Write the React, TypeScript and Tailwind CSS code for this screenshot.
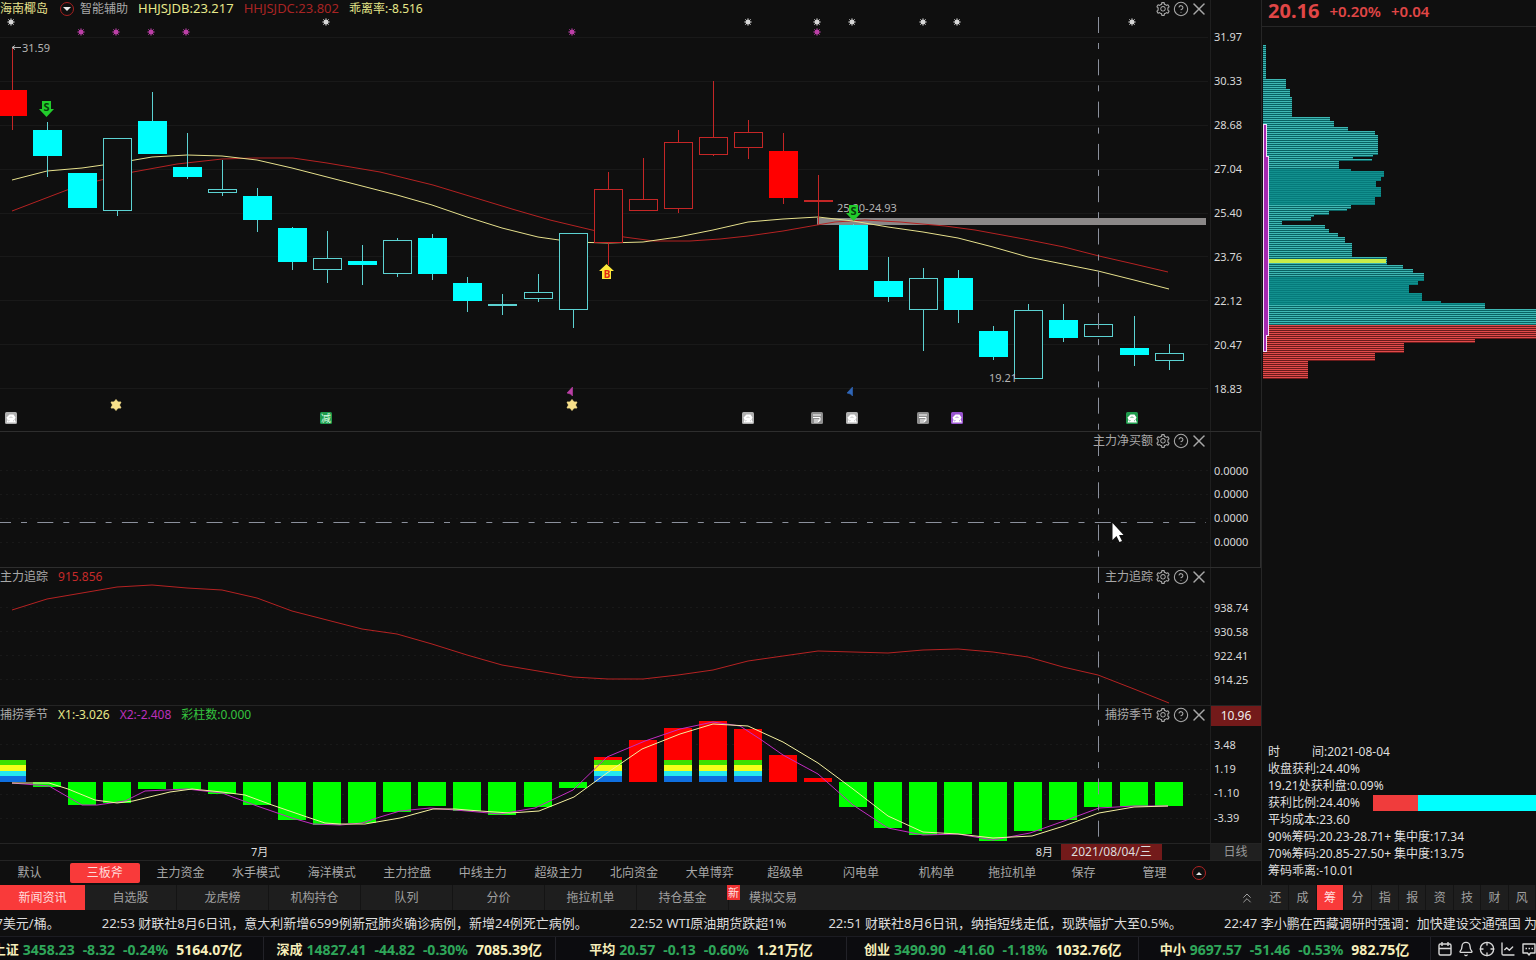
import { Fragment } from 'react';
import type { ReactNode } from 'react';
import { Bell, ChartLine, ChevronsUp, CircleQuestionMark, Crosshair, X } from 'lucide-react';
import { AiOutlineSetting } from 'react-icons/ai';
import clsx from 'clsx';

type Point = [number, number];
type CandleKind = 'up' | 'upHollow' | 'down' | 'downHollow';

interface Candle {
  high: number;
  top: number;
  bottom: number;
  low: number;
  kind: CandleKind;
}

interface IndexQuote {
  name: string;
  last: string;
  change: string;
  percent: string;
  turnover: string;
}

// Horizontal centre of the n-th trading day
const dayX = (i: number) => Math.round(11.6 + 35.06 * i);

const c = (high: number, top: number, bottom: number, low: number, kind: CandleKind): Candle => ({
  high,
  top,
  bottom,
  low,
  kind,
});

const CANDLES: Candle[] = [
  c(48, 90, 116, 130, 'up'),
  c(122, 130, 156, 177, 'down'),
  c(173, 173, 208, 208, 'down'),
  c(138, 138, 210, 216, 'downHollow'),
  c(92, 121, 154, 154, 'down'),
  c(133, 167, 177, 179, 'down'),
  c(160, 189, 192, 196, 'downHollow'),
  c(188, 196, 220, 232, 'down'),
  c(227, 228, 262, 270, 'down'),
  c(231, 258, 269, 283, 'downHollow'),
  c(245, 261, 265, 285, 'down'),
  c(238, 240, 273, 277, 'downHollow'),
  c(234, 238, 274, 280, 'down'),
  c(277, 283, 301, 312, 'down'),
  c(294, 304, 306, 315, 'down'),
  c(274, 292, 298, 302, 'downHollow'),
  c(233, 233, 309, 328, 'downHollow'),
  c(172, 189, 242, 265, 'upHollow'),
  c(158, 199, 210, 210, 'upHollow'),
  c(130, 142, 208, 213, 'upHollow'),
  c(81, 137, 154, 156, 'upHollow'),
  c(120, 132, 147, 159, 'upHollow'),
  c(133, 151, 198, 204, 'up'),
  c(175, 200, 202, 224, 'up'),
  c(224, 225, 270, 270, 'down'),
  c(257, 281, 297, 302, 'down'),
  c(268, 278, 309, 351, 'downHollow'),
  c(270, 278, 310, 323, 'down'),
  c(326, 331, 357, 360, 'down'),
  c(304, 310, 378, 378, 'downHollow'),
  c(304, 320, 338, 342, 'down'),
  c(314, 324, 336, 336, 'downHollow'),
  c(316, 348, 355, 366, 'down'),
  c(344, 353, 360, 370, 'downHollow'),
];

const LINE_B = [
  180, 171, 168, 163, 157, 155, 156, 160, 168, 177, 186, 195, 205, 217, 228, 237, 242, 243, 242, 237, 230,
  222, 219, 217, 221, 227, 232, 238, 247, 257, 264, 271, 280, 289,
].map((y, i): Point => [dayX(i), y]);

const LINE_C: Point[] = [
  [12, 211], [67, 190], [97, 181], [133, 172], [177, 164], [222, 159], [254, 158], [293, 158], [327, 163],
  [380, 172], [433, 185], [512, 209], [550, 220], [592, 230], [624, 237], [654, 241], [690, 241], [720, 239],
  [748, 236], [783, 231], [817, 225], [835, 222], [865, 220], [900, 222], [945, 226], [975, 230], [1024, 239],
  [1064, 247], [1099, 256], [1134, 264], [1168, 272],
];

const TRACKING: Point[] = [
  610, 599, 593, 587, 585, 588, 590, 598, 611, 620, 629, 634, 644, 655, 665, 671, 677, 679, 679, 675, 670,
  661, 656, 651, 652, 653, 650, 649, 652, 657, 667, 675, 689, 703,
].map((y, i): Point => [dayX(i), y]);

const ZERO_Y = 782;
const BARS = [
  760, 787, 805, 803, 789, 789, 794, 805, 820, 825, 823, 812, 806, 811, 815, 807, 788, 757, 740, 728, 721,
  729, 755, 778, 807, 828, 835, 834, 841, 831, 820, 807, 806, 806,
];
const RAINBOW_DAYS = [0, 17, 19, 20, 21];

const X1_LINE: Point[] = [
  [12, 783], [49, 783], [68, 789], [95, 800], [117, 803], [133, 801], [170, 792], [192, 789], [222, 792],
  [245, 795], [272, 805], [307, 817], [325, 823], [340, 824], [365, 824], [400, 818], [433, 809], [455, 809],
  [480, 811], [510, 813], [539, 811], [574, 797], [607, 773], [642, 749], [680, 734], [713, 724], [748, 726],
  [783, 742], [818, 763], [853, 789], [888, 816], [923, 832], [958, 834], [993, 838], [1032, 836], [1064, 826],
  [1099, 813], [1134, 807], [1168, 806],
];
const X2_LINE: Point[] = [
  [12, 783], [49, 786], [82, 805], [97, 805], [125, 801], [145, 791], [187, 789], [222, 793], [257, 806],
  [292, 818], [313, 824], [340, 825], [362, 823], [380, 817], [400, 811], [430, 808], [467, 811], [500, 814],
  [535, 808], [573, 790], [607, 757], [645, 741], [680, 729], [713, 722], [740, 726], [760, 739], [783, 755],
  [818, 774], [853, 805], [888, 828], [923, 835], [958, 834], [993, 840], [1030, 833], [1064, 821], [1099, 808],
  [1134, 806], [1168, 806],
];

// Chip distribution: [first y, bar width], each entry holds until the next one
const CHIPS: Point[] = [
  [45, 3], [79, 23], [89, 27], [97, 29], [117, 67], [120, 71], [127, 85], [131, 112], [135, 115], [155, 110],
  [157, 90], [159, 109], [161, 76], [169, 88], [171, 121], [177, 118], [181, 113], [187, 118], [197, 112],
  [205, 88], [209, 84], [211, 66], [215, 51], [217, 48], [221, 19], [225, 62], [229, 66], [233, 75], [237, 82],
  [243, 89], [257, 124], [265, 140], [269, 150], [273, 161], [281, 155], [285, 146], [293, 159], [301, 178],
  [303, 222], [309, 274], [339, 212], [343, 141], [353, 112], [361, 45],
];
const CHIP_ROWS = Array.from({ length: 167 }, (_, i) => {
  const y = 45 + i * 2;
  const run = CHIPS.filter(([start]) => start <= y).pop();
  return { y, width: run ? run[1] : 0 };
});

const chipColors = (y: number) => {
  if (y >= 325) return ['#6a1b1b', '#e24a4a'];
  if ((y > 168 && y < 205) || (y > 275 && y < 305)) return ['#067a7a', '#12908e'];
  return ['#0a6262', '#3fb8b4'];
};

const TEMPLATES = [
  '三板斧', '主力资金', '水手模式', '海洋模式', '主力控盘', '中线主力', '超级主力', '北向资金', '大单博弈', '超级单',
  '闪电单', '机构单', '拖拉机单',
];
const NAV_TABS = ['自选股', '龙虎榜', '机构持仓', '队列', '分价', '拖拉机单', '持仓基金', '模拟交易'];
const SIDE_TABS = ['还', '成', '筹', '分', '指', '报', '资', '技', '财', '风'];

const NEWS = [
  '57美元/桶。',
  '22:53 财联社8月6日讯，意大利新增6599例新冠肺炎确诊病例，新增24例死亡病例。',
  '22:52 WTI原油期货跌超1%',
  '22:51 财联社8月6日讯，纳指短线走低，现跌幅扩大至0.5%。',
  '22:47 李小鹏在西藏调研时强调：加快建设交通强国 为',
];

const INDEXES: IndexQuote[] = [
  { name: '上证', last: '3458.23', change: '-8.32', percent: '-0.24%', turnover: '5164.07亿' },
  { name: '深成', last: '14827.41', change: '-44.82', percent: '-0.30%', turnover: '7085.39亿' },
  { name: '平均', last: '20.57', change: '-0.13', percent: '-0.60%', turnover: '1.21万亿' },
  { name: '创业', last: '3490.90', change: '-41.60', percent: '-1.18%', turnover: '1032.76亿' },
  { name: '中小', last: '9697.57', change: '-51.46', percent: '-0.53%', turnover: '982.75亿' },
];

const toPoints = (points: Point[]) => points.map((p) => p.join(',')).join(' ');

function Gridlines({ ys, dashed }: { ys: number[]; dashed?: boolean }) {
  return (
    <g stroke="#191919" strokeDasharray={dashed ? '2 4' : undefined} shapeRendering="crispEdges">
      {ys.map((y) => (
        <line key={y} x1={0} x2={1208} y1={y + 0.5} y2={y + 0.5} />
      ))}
    </g>
  );
}

function CandleShape({ x, candle }: { x: number; candle: Candle }) {
  const { high, top, bottom, low, kind } = candle;
  const isUp = kind === 'up' || kind === 'upHollow';
  const hollow = kind === 'upHollow' || kind === 'downHollow';
  const stroke = isUp ? '#c42626' : '#5cd2d2';
  const fill = isUp ? '#ff0000' : '#00ffff';

  return (
    <g>
      {high < top && <line x1={x + 0.5} x2={x + 0.5} y1={high} y2={top} stroke={stroke} />}
      {low > bottom && <line x1={x + 0.5} x2={x + 0.5} y1={bottom} y2={low} stroke={stroke} />}
      {hollow ? (
        <rect x={x - 13.5} y={top + 0.5} width={28} height={bottom - top} fill="#0f0f0f" stroke={stroke} />
      ) : (
        <rect x={x - 14} y={top} width={29} height={bottom - top} fill={bottom - top < 3 ? stroke : fill} />
      )}
    </g>
  );
}

function Spark({ x, y, color }: { x: number; y: number; color: string }) {
  return (
    <g transform={`translate(${x} ${y})`}>
      <path d="M0-4V4M-4 0H4M-3-3L3 3M3-3L-3 3" stroke={color} strokeWidth={0.8} opacity={0.8} />
      <circle r={2.5} fill={color} />
    </g>
  );
}

function EventBadge({ x, color, kind }: { x: number; color: string; kind: 'blob' | 'doc' | 'cut' }) {
  return (
    <g transform={`translate(${x - 6} 412)`}>
      <rect width={12} height={12} rx={1.5} fill={color} />
      {kind === 'blob' && (
        <>
          <path d="M1.500 5.500L4.500 2.500H8.500L10.500 5.500L9.500 7.500L11 10.500H1.500L2.500 8Z" fill="#fff" />
          <path d="M4.500 5.500Q6 4.500 7.500 5.500M3 9L4.500 8.500M9 8.500L8 9" fill="none" stroke={color} strokeWidth={0.7} />
        </>
      )}
      {kind === 'doc' && (
        <path d="M2 3H10M2 5.500H9M3 8H9V5.500M3 10H7L9 8" fill="none" stroke="#fff" strokeWidth={1.1} />
      )}
      {kind === 'cut' && (
        <text x={6} y={9.5} fontSize={10} textAnchor="middle" fill="#d9ffe4">
          减
        </text>
      )}
    </g>
  );
}

function PriceChart() {
  return (
    <svg viewBox="0 18 1210 413" className="block h-auto w-full overflow-visible">
      <Gridlines ys={[37, 81, 125, 169, 213, 256, 300, 344, 388]} />
      <rect x={817} y={218} width={389} height={7} fill="#8b8888" />
      <polyline points={toPoints(LINE_C)} fill="none" stroke="#b52222" />
      <polyline points={toPoints(LINE_B)} fill="none" stroke="#e6e08c" />
      <g shapeRendering="crispEdges">
        {CANDLES.map((candle, i) => (
          <CandleShape key={i} x={dayX(i)} candle={candle} />
        ))}
      </g>

      {[11, 326, 748, 817, 852, 923, 957, 1132].map((x) => (
        <Spark key={x} x={x} y={22} color="#d6d6d6" />
      ))}
      {[81, 116, 151, 186, 572, 817].map((x) => (
        <Spark key={x} x={x} y={32} color="#bb3fa6" />
      ))}

      <path d="M12 47.500H21M12 47.500L15 45.500M12 47.500L15 49.500" stroke="#b4b4b4" fill="none" />
      <g fontSize={11} fill="#b4b4b4">
        <text x={22} y={52}>31.59</text>
        <text x={837} y={212}>25.20-24.93</text>
        <text x={989} y={382}>19.21</text>
      </g>

      {/* Sell and buy signals */}
      {[[46, 101], [853, 205]].map(([x, y]) => (
        <g key={x} transform={`translate(${x} ${y})`}>
          <path d="M-4 0H5V8H8L0.500 16L-7 8H-4Z" fill="#22cc2c" />
          <text x={0.5} y={10} fontSize={11} fontWeight={700} textAnchor="middle" fill="#063d0a">
            S
          </text>
        </g>
      ))}
      <path d="M606.500 264L614 271H611V279H602V271H599Z" fill="#ffe83a" />
      <text x={607} y={278} fontSize={10} fontWeight={700} textAnchor="middle" fill="#e02a10">
        B
      </text>

      <path d="M572.500 387V396L570.500 394L567 393Z" fill="#bb3fa6" stroke="#bb3fa6" strokeWidth={0.6} />
      <path d="M852.500 387V396L850.500 394L847 393Z" fill="#2f66b8" stroke="#2f66b8" strokeWidth={0.6} />
      {[116, 572].map((x) => (
        <path
          key={x}
          transform={`translate(${x} 405)`}
          d="M0-5.500L2-3H5L3.500 0L5 3H2L0 5.500L-2 3H-5L-3.500 0L-5-3H-2Z"
          fill="#f7e08a"
          stroke="#f7e08a"
          strokeWidth={0.8}
          strokeLinejoin="round"
        />
      ))}

      {[11, 748, 852].map((x) => (
        <EventBadge key={x} x={x} color="#b0b0b0" kind="blob" />
      ))}
      <EventBadge x={326} color="#1f9a4c" kind="cut" />
      <EventBadge x={817} color="#8f8f8f" kind="doc" />
      <EventBadge x={923} color="#8f8f8f" kind="doc" />
      <EventBadge x={957} color="#9a55d0" kind="blob" />
      <EventBadge x={1132} color="#1f9a4c" kind="blob" />
    </svg>
  );
}

function SeasonChart() {
  return (
    <svg viewBox="0 724 1210 119" className="block h-auto w-full overflow-visible">
      <Gridlines ys={[744, 769, 794, 818]} dashed />
      {BARS.map((y, i) => {
        const x = dayX(i) - 14;
        const positive = y < ZERO_Y;
        return (
          <g key={i} shapeRendering="crispEdges">
            <rect
              x={x}
              y={Math.min(y, ZERO_Y)}
              width={28}
              height={Math.abs(y - ZERO_Y)}
              fill={positive ? '#ff0000' : '#00ff00'}
            />
            {RAINBOW_DAYS.includes(i) && (
              <>
                <rect x={x} y={760} width={28} height={5} fill="#3be000" />
                <rect x={x} y={765} width={28} height={6} fill="#f2ff1a" />
                <rect x={x} y={771} width={28} height={5} fill="#25e8ee" />
                <rect x={x} y={776} width={28} height={6} fill="#0f6fe0" />
              </>
            )}
          </g>
        );
      })}
      <polyline points={toPoints(X2_LINE)} fill="none" stroke="#c22cc2" />
      <polyline points={toPoints(X1_LINE)} fill="none" stroke="#f4f0a0" />
    </svg>
  );
}

function PanelTools({ title }: { title?: string }) {
  return (
    <div className="ml-auto flex items-center gap-0.5 pr-[3px] text-[#a8a8a8]">
      {title && <span>{title}</span>}
      <button type="button" aria-label="设置" className="flex size-4 items-center justify-center">
        <AiOutlineSetting className="size-4 shrink-0" />
      </button>
      <button type="button" aria-label="帮助" className="flex size-4 items-center justify-center">
        <CircleQuestionMark className="size-4 shrink-0" strokeWidth={1.6} />
      </button>
      <button type="button" aria-label="关闭" className="flex size-4 items-center justify-center">
        <X className="size-5 shrink-0" strokeWidth={1.8} />
      </button>
    </div>
  );
}

interface PanelProps {
  header: ReactNode;
  title?: string;
  axis: ReactNode;
  framed?: boolean;
  className?: string;
  children: ReactNode;
}

function Panel({ header, title, axis, framed, className, children }: PanelProps) {
  return (
    <section className={clsx('flex', className)}>
      <div className="min-w-0 flex-1">
        <div className="flex h-[18px] items-center gap-2.5 whitespace-nowrap text-[#a8a8a8]">
          {header}
          <PanelTools title={title} />
        </div>
        {children}
      </div>
      <div
        className={clsx(
          'flex w-[51px] shrink-0 flex-col border-l border-l-[#1f1f1f] text-[11px] text-[#d8d8d8]',
          framed && 'border-r border-r-[#2e2e2e]',
        )}
      >
        {axis}
      </div>
    </section>
  );
}

function AxisLabels({ values, className }: { values: string[]; className: string }) {
  return (
    <ul className={clsx('flex flex-1 flex-col pl-[3px]', className)}>
      {values.map((value, i) => (
        <li key={i} className="flex flex-1 items-center">
          {value}
        </li>
      ))}
    </ul>
  );
}

function ChartColumn() {
  return (
    <div className="relative">
      <Panel
        className="border-b border-[#2e2e2e]"
        axis={
          <AxisLabels
            className="pt-[15px] pb-[20px]"
            values={['31.97', '30.33', '28.68', '27.04', '25.40', '23.76', '22.12', '20.47', '18.83']}
          />
        }
        header={
          <>
            <span className="text-[#e6e08c]">海南椰岛</span>
            <button
              type="button"
              aria-label="切换指标"
              className="ml-0.5 flex size-[14px] items-center justify-center rounded-full border border-[#a82020]"
            >
              <svg viewBox="0 0 8 4" className="w-2">
                <path d="M0 0H8L4 4Z" fill="#e8e8e8" />
              </svg>
            </button>
            <span className="-ml-1">智能辅助</span>
            <span className="text-[13px] text-[#e6e88a]">HHJSJDB:23.217</span>
            <span className="text-[13px] text-[#a82424]">HHJSJDC:23.802</span>
            <span className="text-[#e6e88a]">乖离率:-8.516</span>
          </>
        }
      >
        <PriceChart />
      </Panel>

      <Panel
        className="border-b border-[#2e2e2e]"
        framed
        title="主力净买额"
        axis={<AxisLabels className="pt-[27px] pb-[13px]" values={['0.0000', '0.0000', '0.0000', '0.0000']} />}
        header={null}
      >
        <svg viewBox="0 450 1210 117" className="block h-auto w-full">
          <Gridlines ys={[470, 494, 518, 542]} dashed />
        </svg>
      </Panel>

      <Panel
        title="主力追踪"
        axis={<AxisLabels className="pt-[28px] pb-[13px]" values={['938.74', '930.58', '922.41', '914.25']} />}
        header={
          <>
            <span>主力追踪</span>
            <span className="text-[#c62a2a]">915.856</span>
          </>
        }
      >
        <svg viewBox="0 586 1210 119" className="block h-auto w-full overflow-visible">
          <Gridlines ys={[607, 631, 655, 679]} dashed />
          <polyline points={toPoints(TRACKING)} fill="none" stroke="#b52222" />
        </svg>
      </Panel>

      <Panel
        className="border-t border-[#242424]"
        title="捕捞季节"
        axis={
          <>
            <div className="flex h-5 items-center justify-center bg-[#731a1a] text-xs text-[#eee]">10.96</div>
            <AxisLabels className="pt-[7px] pb-[13px]" values={['3.48', '1.19', '-1.10', '-3.39']} />
          </>
        }
        header={
          <>
            <span>捕捞季节</span>
            <span className="text-[#e6e88a]">X1:-3.026</span>
            <span className="text-[#bb2fbb]">X2:-2.408</span>
            <span className="text-[#35c43f]">彩柱数:0.000</span>
          </>
        }
      >
        <SeasonChart />
      </Panel>

      {/* Crosshair and pointer */}
      <svg viewBox="0 0 1261 843" className="pointer-events-none absolute inset-0 h-full w-full">
        <g stroke="#8b909c" strokeDasharray="16 10 6 10.3">
          <line x1={1098.5} x2={1098.5} y1={17} y2={838} />
          <line x1={-5} x2={1206} y1={522.5} y2={522.5} />
        </g>
        <path d="M1112.500 523V540L1116.500 536L1119.500 542L1122 541L1119 535H1123.500Z" fill="#fff" />
      </svg>
    </div>
  );
}

function DateRow() {
  return (
    <div className="flex h-[17px] border-t border-[#242424] text-[11px] text-[#ddd]">
      <div className="flex flex-1 items-center pr-[48px] pl-[251px]">
        <span>7月</span>
        <span className="ml-auto">8月</span>
        <span className="ml-2 w-[101px] bg-[#731a1a] text-center text-xs leading-4">2021/08/04/三</span>
      </div>
      <button type="button" className="w-[51px] bg-[#202020] text-xs leading-4 text-[#999]">
        日线
      </button>
    </div>
  );
}

function TemplateBar() {
  return (
    <div className="flex h-[25px] items-center border-t border-[#242424] text-[#a8a8a8]">
      <button type="button" className="w-[67px] pr-2">
        默认
      </button>
      <div className="grid flex-1 grid-cols-13">
        {TEMPLATES.map((name, i) => (
          <button
            key={name}
            type="button"
            className={clsx(
              'mx-[3px] h-5 rounded-xs whitespace-nowrap',
              i === 0 && 'bg-[#f93a3a] text-[#ffd9d9]',
            )}
          >
            {name}
          </button>
        ))}
      </div>
      <button type="button" className="w-[67px]">
        保存
      </button>
      <button type="button" className="w-[75px]">
        管理
      </button>
      <button
        type="button"
        aria-label="展开"
        className="mr-[55px] flex size-[14px] items-center justify-center rounded-full border border-[#b02222]"
      >
        <svg viewBox="0 0 8 4" className="w-1.5">
          <path d="M0 4H8L4 0Z" fill="#e8e8e8" />
        </svg>
      </button>
    </div>
  );
}

function ChipPanel() {
  return (
    <aside className="flex w-[275px] shrink-0 flex-col border-l border-[#262626]">
      <div className="flex h-[27px] items-center gap-2.5 border-b border-[#262626] pb-1 pl-1.5 font-bold text-[#e04646]">
        <span className="text-xl leading-5">20.16</span>
        <span className="text-[15px] font-semibold">+0.20%</span>
        <span className="text-[15px] font-semibold">+0.04</span>
      </div>
      <svg viewBox="0 27 274 360" className="block h-auto w-full" shapeRendering="crispEdges">
        {CHIP_ROWS.map(({ y, width }) => {
          const [base, line] = chipColors(y);
          return (
            <Fragment key={y}>
              <rect x={1} y={y} width={width} height={1} fill={line} />
              <rect x={1} y={y + 1} width={width} height={1} fill={base} />
            </Fragment>
          );
        })}
        <rect x={1} y={259} width={123} height={4} fill="#c8ee4a" />
        <rect x={1} y={124} width={4} height={228} fill="#f6dcf8" />
        <rect x={3} y={156} width={4} height={180} fill="#f6dcf8" />
        <rect x={2} y={125} width={2} height={226} fill="#a428b0" />
        <rect x={4} y={157} width={2} height={178} fill="#a428b0" />
      </svg>
      <dl className="mt-auto pb-[6px] pl-1.5 leading-[17px] whitespace-nowrap text-[#dedede]">
        <div className="flex">
          <dt className="flex gap-8">
            <span>时</span>
            <span>间:</span>
          </dt>
          <dd>2021-08-04</dd>
        </div>
        <div className="flex">
          <dt>收盘获利:</dt>
          <dd>24.40%</dd>
        </div>
        <div className="flex">
          <dt>19.21处获利盘:</dt>
          <dd>0.09%</dd>
        </div>
        <div className="flex items-center">
          <dt>获利比例:</dt>
          <dd className="flex flex-1 items-center justify-between">
            24.40%
            <span className="flex h-4 w-[163px]">
              <span className="w-[45px] bg-[#f03c3c]" />
              <span className="flex-1 bg-[#00ffff]" />
            </span>
          </dd>
        </div>
        <div className="flex">
          <dt>平均成本:</dt>
          <dd>23.60</dd>
        </div>
        <div className="flex">
          <dt>90%筹码:</dt>
          <dd>20.23-28.71+ 集中度:17.34</dd>
        </div>
        <div className="flex">
          <dt>70%筹码:</dt>
          <dd>20.85-27.50+ 集中度:13.75</dd>
        </div>
        <div className="flex">
          <dt>筹码乖离:</dt>
          <dd>-10.01</dd>
        </div>
      </dl>
    </aside>
  );
}

function NavBar() {
  return (
    <nav className="flex h-[25px] bg-[#1e1e1e] text-[#a0a0a0]">
      <button type="button" className="w-[85px] bg-[#f93a3a] text-[#ffdede]">
        新闻资讯
      </button>
      {NAV_TABS.map((name, i) => (
        <button
          key={name}
          type="button"
          className={clsx('relative w-[92px]', i < NAV_TABS.length - 1 ? 'border-r border-[#141414]' : 'pr-1')}
        >
          {name}
          {i === NAV_TABS.length - 1 && (
            <span className="absolute top-0 -left-0.5 bg-[#f03232] px-px text-[11px] leading-[15px] text-[#ffe0e0]">
              新
            </span>
          )}
        </button>
      ))}
      <button type="button" aria-label="收起" className="mr-1.5 ml-auto">
        <ChevronsUp className="size-4" strokeWidth={1.5} />
      </button>
      <div className="flex w-[275px] pl-px">
        {SIDE_TABS.map((name) => (
          <button
            key={name}
            type="button"
            className={clsx(
              'flex-1 border-r border-[#141414]',
              name === '筹' && 'bg-[#f93a3a] text-[#ffdede]',
            )}
          >
            {name}
          </button>
        ))}
      </div>
    </nav>
  );
}

function NewsTicker() {
  return (
    <div className="-ml-3 flex h-[26px] items-center gap-[42px] overflow-hidden pt-0.5 text-[13px] whitespace-nowrap text-[#dcdcdc]">
      {NEWS.map((item) => (
        <a key={item} href="#news" className="shrink-0">
          {item}
        </a>
      ))}
    </div>
  );
}

function IndexBar() {
  return (
    <footer className="flex h-6 items-stretch overflow-hidden border-t border-[#1c1c22] bg-[#0c0c0f]">
      <div className="-ml-7 grid flex-1 grid-cols-5 text-sm font-bold whitespace-nowrap">
        {INDEXES.map(({ name, last, change, percent, turnover }) => (
          <div key={name} className="flex items-center justify-center gap-2 border-r border-[#222228] pt-0.5">
            <span className="flex items-center gap-1">
              <span className="text-[13px] text-[#f7efbb]">{name}</span>
              <span className="text-[#2fa65a]">{last}</span>
            </span>
            <span className="text-[#2fa65a]">{change}</span>
            <span className="text-[#2fa65a]">{percent}</span>
            <span className="text-[#f7efbb]">{turnover}</span>
          </div>
        ))}
      </div>
      <div className="flex w-[105px] items-center gap-[5px] pl-1.5 text-[#d8d8d8]">
        <button type="button" aria-label="日历">
          <svg viewBox="0 0 16 16" className="size-4" fill="none" stroke="currentColor" strokeWidth={1.4}>
            <rect x={2} y={3} width={12} height={11} rx={1.5} />
            <path d="M2 7.500H14M5 1V5M11 1V5" />
          </svg>
        </button>
        <button type="button" aria-label="提醒">
          <Bell className="size-4" />
        </button>
        <button type="button" aria-label="定位">
          <Crosshair className="size-4" />
        </button>
        <button type="button" aria-label="走势">
          <ChartLine className="size-4" />
        </button>
        <button type="button" aria-label="消息" className="shrink-0">
          <svg viewBox="0 0 16 16" className="size-4" fill="none" stroke="currentColor" strokeWidth={1.4}>
            <path d="M2 3H14V12H9.500L8 14L6.500 12H2Z" strokeLinejoin="round" />
            <path d="M4.500 7.500H6M7.500 7.500H9M10.500 7.500H12" strokeWidth={1.6} />
          </svg>
        </button>
      </div>
    </footer>
  );
}

export default function App() {
  return (
    <div
      lang="zh-CN"
      className="flex min-h-screen flex-col overflow-hidden bg-[#0f0f0f] font-['Noto_Sans','Noto_Sans_CJK_SC',sans-serif] text-xs"
    >
      <main className="flex">
        <div className="min-w-0 flex-1">
          <ChartColumn />
          <DateRow />
          <TemplateBar />
        </div>
        <ChipPanel />
      </main>
      <NavBar />
      <NewsTicker />
      <IndexBar />
    </div>
  );
}
